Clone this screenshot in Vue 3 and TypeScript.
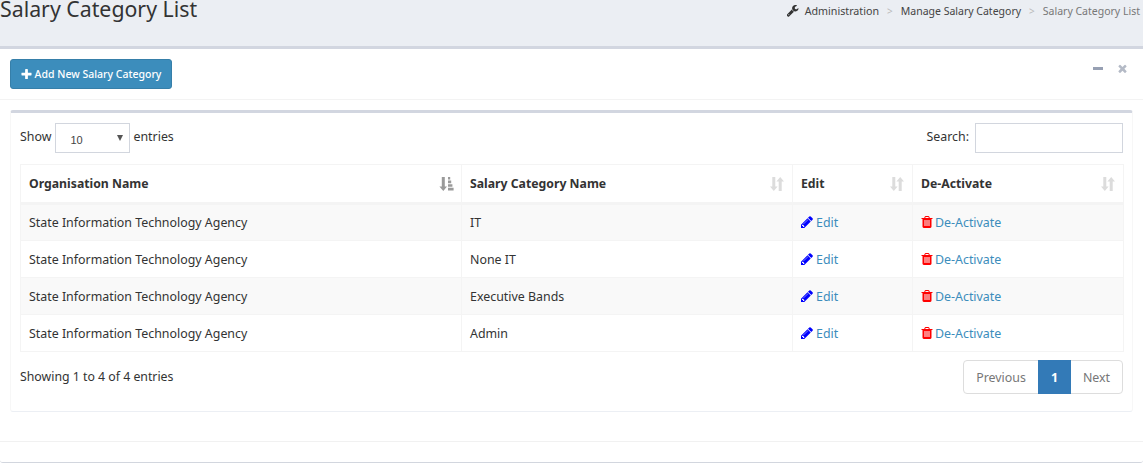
<script setup lang="ts">
const rows: string[] = ['IT', 'None IT', 'Executive Bands', 'Admin']
const org = 'State Information Technology Agency'
const pencil = 'M491 1536l91-91-235-235-91 91v107h128v128h107zm523-928q0-22-22-22-10 0-17 7l-542 542q-7 7-7 17 0 22 22 22 10 0 17-7l542-542q7-7 7-17zm-54-192l416 416-832 832h-416v-416zm683 96q0 53-37 90l-166 166-416-416 166-165q36-38 90-38 53 0 91 38l235 234q37 39 37 91z'
const trash = 'M704 1376v-704q0-14-9-23t-23-9h-64q-14 0-23 9t-9 23v704q0 14 9 23t23 9h64q14 0 23-9t9-23zm256 0v-704q0-14-9-23t-23-9h-64q-14 0-23 9t-9 23v704q0 14 9 23t23 9h64q14 0 23-9t9-23zm256 0v-704q0-14-9-23t-23-9h-64q-14 0-23 9t-9 23v704q0 14 9 23t23 9h64q14 0 23-9t9-23zm-544-992h448l-48-117q-7-9-17-11h-317q-10 2-17 11zm928 32v64q0 14-9 23t-23 9h-96v948q0 83-47 143.500t-113 60.500h-832q-66 0-113-58.500t-47-141.500v-952h-96q-14 0-23-9t-9-23v-64q0-14 9-23t23-9h309l70-167q15-37 54-63t79-26h320q40 0 79 26t54 63l70 167h309q14 0 23 9t9 23z'
const wrench = 'M448 1472q0-26-19-45t-45-19-45 19-19 45 19 45 45 19 45-19 19-45zm644-420l-682 682q-37 37-90 37-52 0-91-37l-106-108q-38-36-38-90 0-53 38-91l681-681q39 98 114.500 173.500t173.500 114.500zm634-435q0 39-23 106-47 134-164.500 217.500t-258.500 83.500q-185 0-316.500-131.500t-131.500-316.500 131.500-316.500 316.500-131.500q58 0 121.500 16.500t107.500 46.500q16 11 16 28t-16 28l-293 169v224l193 107q5-3 79-48.500t135.500-81 70.500-35.500q15 0 23.500 10t8.500 25z'
const plus = 'M1600 736v192q0 40-28 68t-68 28h-416v416q0 40-28 68t-68 28h-192q-40 0-68-28t-28-68v-416h-416q-40 0-68-28t-28-68v-192q0-40 28-68t68-28h416v-416q0-40 28-68t68-28h192q40 0 68 28t28 68v416h416q40 0 68 28t28 68z'
const times = 'M1490 1322q0 40-28 68l-136 136q-28 28-68 28t-68-28l-294-294-294 294q-28 28-68 28t-68-28l-136-136q-28-28-28-68t28-68l294-294-294-294q-28-28-28-68t28-68l136-136q28-28 68-28t68 28l294 294 294-294q28-28 68-28t68 28l136 136q28 28 28 68t-28 68l-294 294 294 294q28 28 28 68z'
</script>

<template>
  <div class="page">
    <header class="top">
      <h1 class="title">Salary Category List</h1>
      <nav class="crumbs">
        <svg class="wrench" viewBox="128 128 1664 1664"><path :d="wrench" /></svg>
        <span class="c1 admin">Administration</span>
        <span class="sep">&gt;</span>
        <span class="c1">Manage Salary Category</span>
        <span class="sep">&gt;</span>
        <span class="c2">Salary Category List</span>
      </nav>
    </header>
    <section class="panel">
      <div class="panel-head">
        <button class="add" type="button">
          <svg class="plus" viewBox="128 128 1536 1536"><path :d="plus" /></svg>
          Add New Salary Category
        </button>
        <div class="tools">
          <span class="minus"></span>
          <svg class="times" viewBox="256 256 1280 1300"><path :d="times" /></svg>
        </div>
      </div>
      <div class="inner">
        <div class="controls">
          <label class="len">Show <span class="fake-select"><span>10</span><i class="arrow"></i></span> entries</label>
          <label class="search">Search: <input type="text" /></label>
        </div>
        <table>
          <colgroup>
            <col class="w1" /><col class="w2" /><col class="w3" /><col class="w4" />
          </colgroup>
          <thead>
            <tr>
              <th>
                <div class="th">Organisation Name
                  <svg class="sort on" viewBox="0 0 16 16"><path d="M3.800 1h3v9.500h2.200L5.300 15 1.400 10.500h2.400z" /><path d="M10 1h2.200v2.600H10zM10 4.600h3.200v2.600H10zM10 8.200h4.400v2.600H10zM10 11.800h5.600v2.800H10z" /></svg>
                </div>
              </th>
              <th v-for="h in ['Salary Category Name', 'Edit', 'De-Activate']" :key="h">
                <div class="th">{{ h }}
                  <svg class="sort" viewBox="0 0 16 16"><path d="M3.300 1h3v9.500h2.300L4.800 15 1 10.500h2.300z" /><path d="M11.200 1L15 5.500h-2.300V15h-3V5.500H7.400z" /></svg>
                </div>
              </th>
            </tr>
          </thead>
          <tbody>
            <tr v-for="r in rows" :key="r">
              <td>{{ org }}</td>
              <td>{{ r }}</td>
              <td>
                <svg class="pencil" viewBox="128 128 1536 1536"><path :d="pencil" /></svg><a>Edit</a>
              </td>
              <td>
                <svg class="trash" viewBox="128 128 1536 1536"><path :d="trash" /></svg><a>De-Activate</a>
              </td>
            </tr>
          </tbody>
        </table>
        <div class="foot">
          <span class="info">Showing 1 to 4 of 4 entries</span>
          <div class="pager">
            <span class="pg first">Previous</span>
            <span class="pg cur">1</span>
            <span class="pg last">Next</span>
          </div>
        </div>
      </div>
      <div class="strip"></div>
    </section>
  </div>
</template>

<style>
html, body { margin: 0; background: #fff; }
</style>

<style scoped>
.page {
  width: 1143px;
  height: 463px;
  overflow: hidden;
  font-family: "Noto Sans", sans-serif;
  font-size: 12.400px;
  color: #333;
  background: #fff;
}
.top {
  height: 46px;
  background: #ebeef3;
  border-bottom: 3px solid #d2d6e0;
  display: flex;
  justify-content: space-between;
  align-items: flex-start;
  overflow: hidden;
}
.title {
  margin: -6px 0 0;
  font-size: 21.300px;
  line-height: 30px;
  font-weight: 400;
  color: #333;
}
.crumbs {
  display: flex;
  align-items: center;
  margin-top: 3px;
  padding-right: 3px;
  font-size: 10.500px;
  line-height: 16px;
  white-space: nowrap;
}
.wrench { width: 12px; height: 12px; fill: #333; margin-right: 6px; }
.admin { font-size: 10.700px; }
.c1 { color: #444; }
.c2 { color: #777; }
.sep { color: #bbb; margin: 0 8px; font-size: 10px; }
.panel { background: #fff; }
.panel-head {
  height: 50px;
  border-bottom: 1px solid #f3f3f3;
  padding: 0 10px;
  display: flex;
  justify-content: space-between;
  align-items: flex-start;
}
.add {
  margin-top: 10px;
  width: 162px;
  height: 30px;
  background: #3c8dbc;
  border: 1px solid #367fa9;
  border-radius: 3px;
  color: #fff;
  font: 500 10.500px "Noto Sans", sans-serif;
  display: flex;
  align-items: center;
  justify-content: center;
  gap: 3px;
  padding: 0;
}
.plus { width: 11px; height: 11px; fill: #fff; }
.tools { display: flex; align-items: center; gap: 15px; margin-top: 15px; margin-right: 6px; }
.minus { width: 10px; height: 3px; background: #97a0b3; }
.times { width: 9px; height: 9px; fill: #b4bac6; }
.inner {
  margin: 10px 10px 0;
  height: 302px;
  border-top: 3px solid #d2d6e0;
  border-bottom: 1px solid #eceff4;
  border-left: 1px solid #f7f7f7;
  border-right: 1px solid #f7f7f7;
  border-radius: 3px;
  padding: 10px 9px 0;
  box-sizing: border-box;
}
.controls { display: flex; justify-content: space-between; height: 41px; align-items: flex-start; }
.len, .search { display: flex; align-items: flex-start; height: 30px; line-height: 28px; }
.fake-select {
  width: 75px;
  height: 30px;
  box-sizing: border-box;
  margin: 0 3px 0 4px;
  border: 1px solid #d2d6de;
  display: flex;
  align-items: center;
  justify-content: space-between;
  padding: 3px 6px 0 14px;
  font: 11px "Liberation Sans", sans-serif;
  color: #444;
}
.arrow {
  width: 0;
  height: 0;
  margin-top: -3px;
  border-left: 3px solid transparent;
  border-right: 3px solid transparent;
  border-top: 6px solid #555;
}
.search input {
  width: 148px;
  height: 30px;
  box-sizing: border-box;
  margin: 0 0 0 6px;
  border: 1px solid #d2d6de;
  padding: 0;
  outline: none;
}
table {
  width: 1103px;
  table-layout: fixed;
  border-collapse: collapse;
  border: 1px solid #f4f4f4;
}
.w1 { width: 441px; } .w2 { width: 331px; } .w3 { width: 120px; } .w4 { width: 211px; }
th, td { border: 1px solid #f4f4f4; padding: 0 8px; text-align: left; }
thead tr { height: 39px; }
th { border-bottom: 3px solid #f4f4f4; font-weight: 700; color: #333; font-size: 12.250px; }
.th { display: flex; justify-content: space-between; align-items: center; }
.sort { width: 16px; height: 16px; fill: #dcdcdc; margin-right: -1px; }
.sort.on { fill: #9a9a9a; }
tbody tr { height: 37px; }
tbody tr:nth-child(odd) { background: #f9f9f9; }
td a { color: #3c8dbc; }
.pencil { width: 12px; height: 12px; fill: #0000ff; margin-right: 3px; vertical-align: -1px; }
.trash { width: 12px; height: 12px; fill: #ff0000; margin-right: 2px; vertical-align: -1px; }
.foot { display: flex; justify-content: space-between; align-items: flex-start; margin-top: 8px; }
.info { margin-top: 8px; line-height: 17px; font-size: 12.300px; }
.pager {
  display: flex;
  height: 34px;
  border: 1px solid #ddd;
  border-radius: 4px;
  box-sizing: border-box;
}
.pg { display: flex; align-items: center; justify-content: center; color: #777; }
.first { width: 74px; }
.cur { width: 33px; background: #337ab7; color: #fff; margin: -1px 0; font-weight: 700; }
.last { width: 51px; }
.strip {
  height: 20px;
  margin-top: 29px;
  border-top: 1px solid #f1f1f1;
  border-bottom: 1px solid #d2d6de;
  border-radius: 0 0 3px 3px;
}
</style>
